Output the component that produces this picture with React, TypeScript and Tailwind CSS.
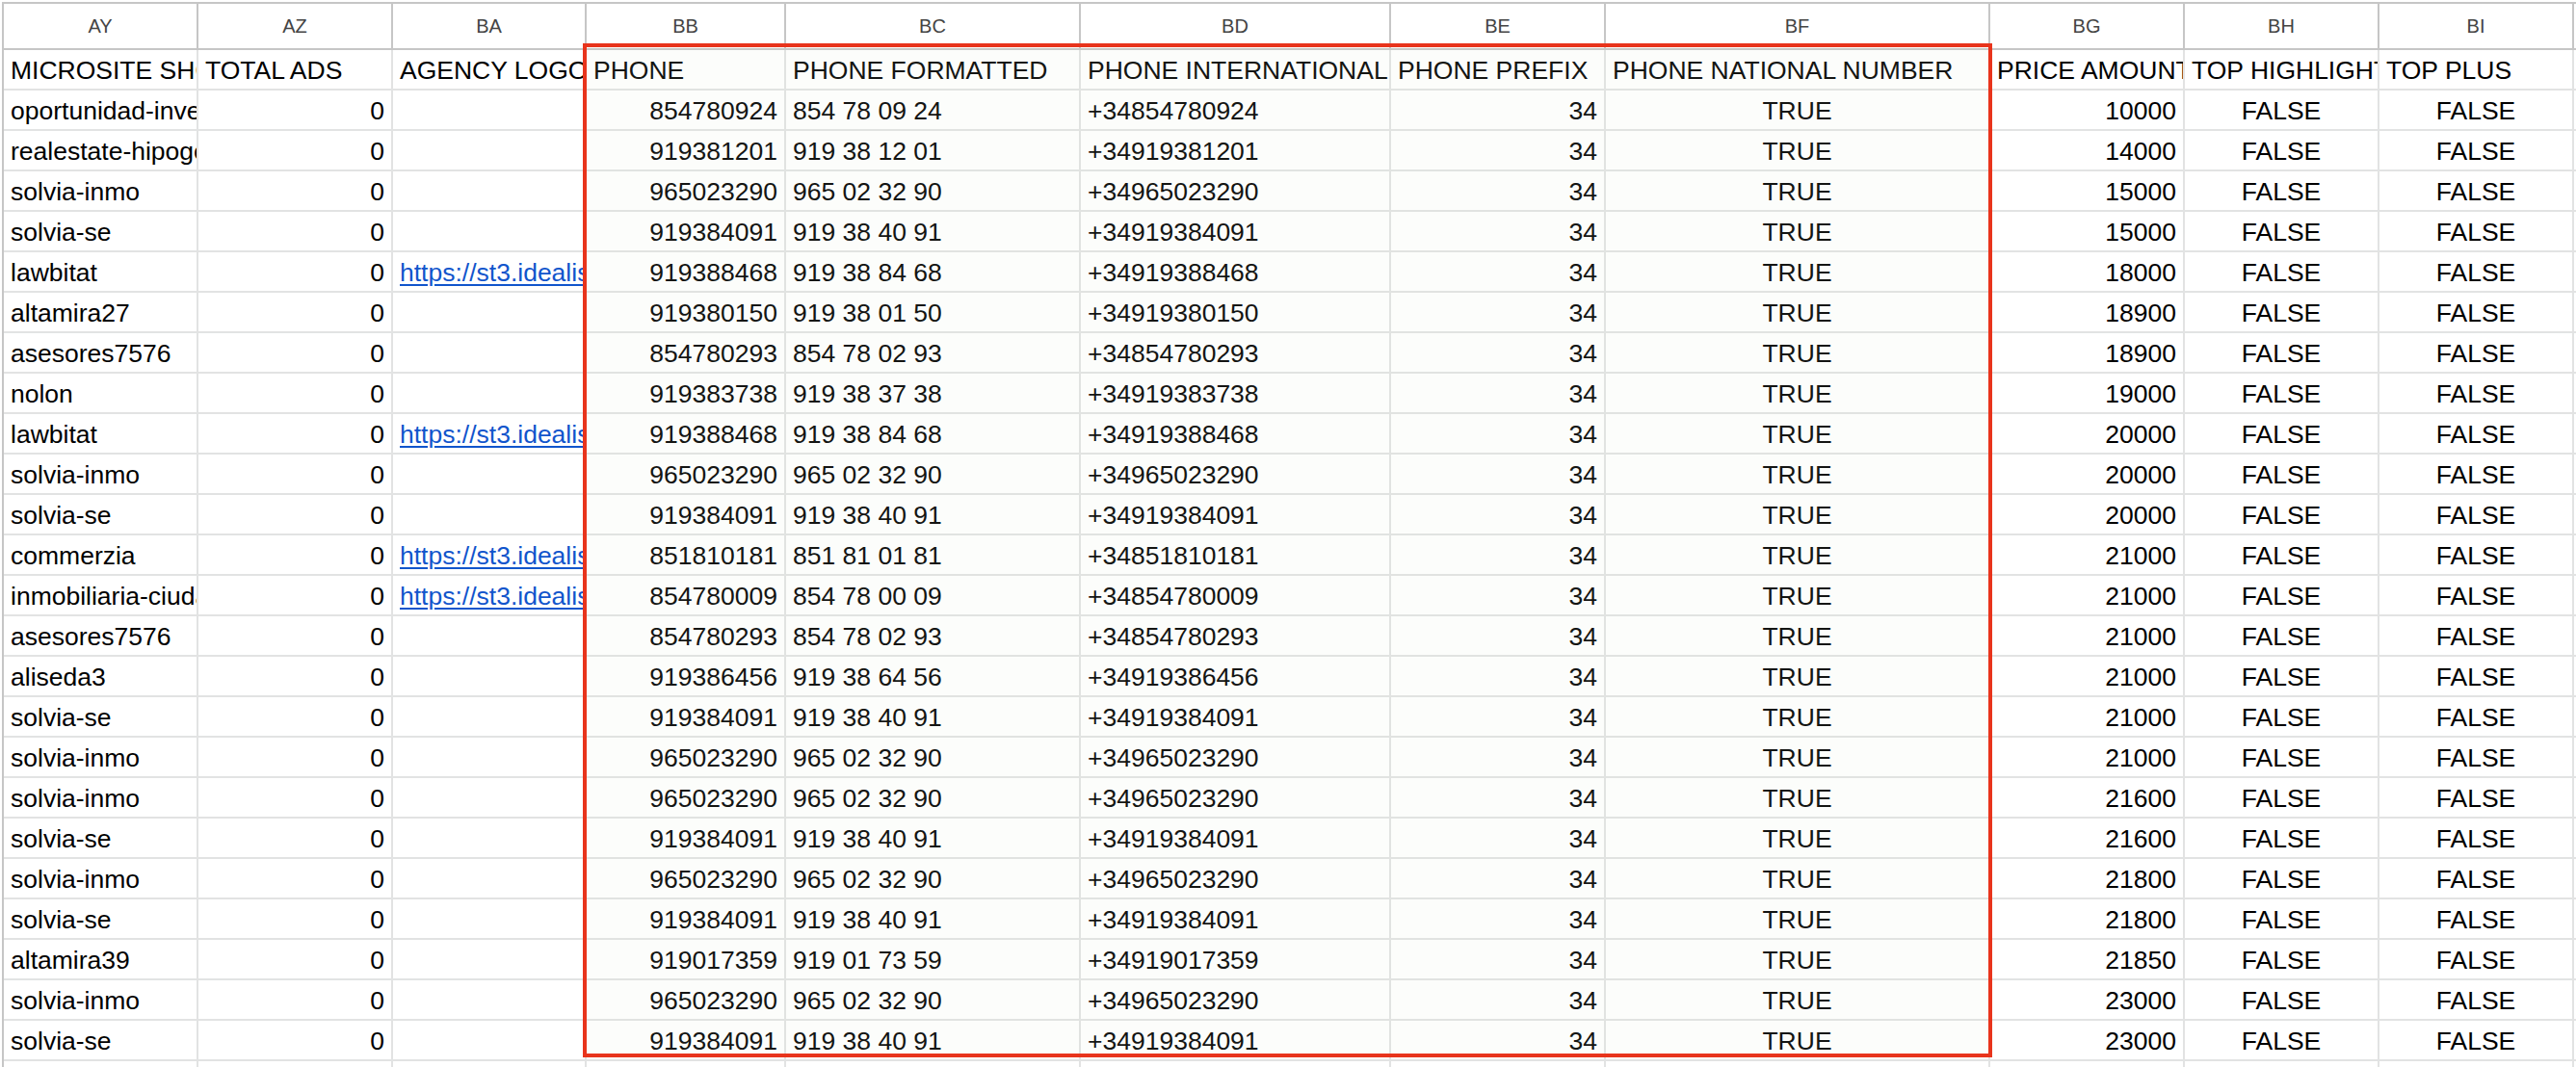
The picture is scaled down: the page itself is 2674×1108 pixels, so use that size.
const widths = [
  "w-[202px]",
  "w-[202px]",
  "w-[201px]",
  "w-[207px]",
  "w-[306px]",
  "w-[322px]",
  "w-[223px]",
  "w-[399px]",
  "w-[202px]",
  "w-[202px]",
  "w-[202px]",
  "w-[200px]",
];

const letters = ["AY", "AZ", "BA", "BB", "BC", "BD", "BE", "BF", "BG", "BH", "BI", ""];

const headers = [
  "MICROSITE SHORT NAME",
  "TOTAL ADS",
  "AGENCY LOGO",
  "PHONE",
  "PHONE FORMATTED",
  "PHONE INTERNATIONAL",
  "PHONE PREFIX",
  "PHONE NATIONAL NUMBER",
  "PRICE AMOUNT",
  "TOP HIGHLIGHT",
  "TOP PLUS",
  "",
];

// left / right / center per column for data rows
const aligns = ["l", "r", "l", "r", "l", "l", "r", "c", "r", "c", "c", "l"];

const alignClass: Record<string, string> = {
  l: "justify-start",
  r: "justify-end",
  c: "justify-center",
};

type Row = [string, boolean, string, number];

const rows: Row[] = [
  ["oportunidad-inversion", false, "854780924", 10000],
  ["realestate-hipogestion", false, "919381201", 14000],
  ["solvia-inmo", false, "965023290", 15000],
  ["solvia-se", false, "919384091", 15000],
  ["lawbitat", true, "919388468", 18000],
  ["altamira27", false, "919380150", 18900],
  ["asesores7576", false, "854780293", 18900],
  ["nolon", false, "919383738", 19000],
  ["lawbitat", true, "919388468", 20000],
  ["solvia-inmo", false, "965023290", 20000],
  ["solvia-se", false, "919384091", 20000],
  ["commerzia", true, "851810181", 21000],
  ["inmobiliaria-ciudad", true, "854780009", 21000],
  ["asesores7576", false, "854780293", 21000],
  ["aliseda3", false, "919386456", 21000],
  ["solvia-se", false, "919384091", 21000],
  ["solvia-inmo", false, "965023290", 21000],
  ["solvia-inmo", false, "965023290", 21600],
  ["solvia-se", false, "919384091", 21600],
  ["solvia-inmo", false, "965023290", 21800],
  ["solvia-se", false, "919384091", 21800],
  ["altamira39", false, "919017359", 21850],
  ["solvia-inmo", false, "965023290", 23000],
  ["solvia-se", false, "919384091", 23000],
];

function formatPhone(p: string) {
  return `${p.slice(0, 3)} ${p.slice(3, 5)} ${p.slice(5, 7)} ${p.slice(7, 9)}`;
}

function Cell({ i, align, children }: { i: number; align: string; children?: any }) {
  return (
    <div
      className={`${widths[i]} ${alignClass[align]} shrink-0 h-full flex items-end pb-[4px] pl-[7px] pr-[7px] border-r-2 border-[#e2e3e3] overflow-hidden whitespace-nowrap leading-[30px]`}
    >
      {children}
    </div>
  );
}

export default function App() {
  return (
    <div className="relative w-[2674px] h-[1108px] overflow-hidden bg-white font-['Liberation_Sans',Arial,sans-serif] text-black">
      <div className="mt-[2px] ml-[2px] border-t-2 border-l-2 border-[#c6c6c6] w-max">
        {/* column letters */}
        <div className="flex h-[48px] border-b-2 border-[#c6c6c6]">
          {letters.map((l, i) => (
            <div
              key={i}
              className={`${widths[i]} shrink-0 h-full flex items-center justify-center border-r-2 border-[#c6c6c6] text-[20px] text-[#444]`}
            >
              {l}
            </div>
          ))}
        </div>

        {/* header row */}
        <div className="flex h-[42px] border-b-2 border-[#e2e3e3] text-[26.5px]">
          {headers.map((h, i) => (
            <Cell key={i} i={i} align="l">
              {h}
            </Cell>
          ))}
        </div>

        {rows.map(([name, logo, phone, price], r) => {
          const values = [
            name,
            "0",
            logo ? "link" : "",
            phone,
            formatPhone(phone),
            `+34${phone}`,
            "34",
            "TRUE",
            String(price),
            "FALSE",
            "FALSE",
            "",
          ];
          return (
            <div key={r} className="flex h-[42px] border-b-2 border-[#e2e3e3] text-[26.5px]">
              {values.map((v, i) => (
                <Cell key={i} i={i} align={aligns[i]}>
                  {v === "link" ? (
                    <span className="text-[#1155cc] underline decoration-[2px] underline-offset-[3px]">
                      https://st3.idealista.com/b1/54/fa/{name}.gif
                    </span>
                  ) : (
                    v
                  )}
                </Cell>
              ))}
            </div>
          );
        })}

        {/* partial trailing row */}
        <div className="flex h-[42px] border-b-2 border-[#e2e3e3] text-[26.5px]">
          {widths.map((_, i) => (
            <Cell key={i} i={i} align="l" />
          ))}
        </div>
      </div>

      {/* red highlight around the phone columns */}
      <div className="absolute top-[45px] left-[605px] w-[1463px] h-[1053px] border-4 border-[#e8341c] bg-[rgba(225,238,215,0.09)] pointer-events-none" />
    </div>
  );
}
